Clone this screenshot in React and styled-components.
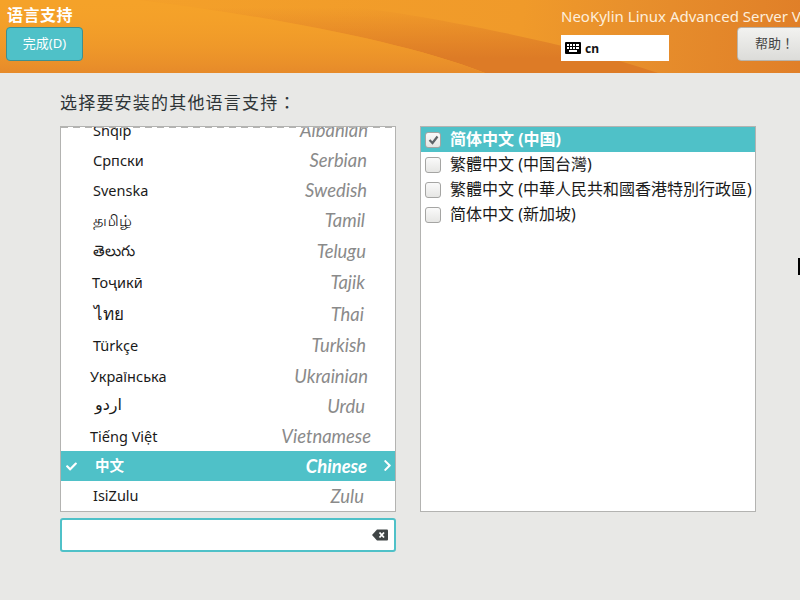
import styled, { createGlobalStyle } from 'styled-components';
import { FaCheck, FaChevronRight } from 'react-icons/fa';

const languages = [
  { native: 'Shqip', english: 'Albanian', height: 30, left: 32, right: 27 },
  { native: 'Српски', english: 'Serbian', height: 30, left: 32, right: 28 },
  { native: 'Svenska', english: 'Swedish', height: 30, left: 32, right: 28 },
  { native: 'தமிழ்', english: 'Tamil', height: 31, left: 32, right: 30, size: 16 },
  { native: 'తెలుగు', english: 'Telugu', height: 31, left: 32, right: 29, size: 15 },
  { native: 'Тоҷикӣ', english: 'Tajik', height: 31, left: 31, right: 30 },
  { native: 'ไทย', english: 'Thai', height: 32, left: 33, right: 31, size: 17 },
  { native: 'Türkçe', english: 'Turkish', height: 31, left: 32, right: 29 },
  { native: 'Українська', english: 'Ukrainian', height: 30, left: 29, right: 27 },
  { native: 'اردو', english: 'Urdu', height: 30, left: 34, right: 30, size: 16, lift: 4 },
  { native: 'Tiếng Việt', english: 'Vietnamese', height: 30, left: 29, right: 24 },
  { native: '中文', english: 'Chinese', height: 30, left: 34, right: 28, selected: true, lift: 3 },
  { native: 'IsiZulu', english: 'Zulu', height: 30, left: 32, right: 31, lift: 3 },
];

const locales = [
  { label: '简体中文 (中国)', checked: true },
  { label: '繁體中文 (中国台灣)' },
  { label: '繁體中文 (中華人民共和國香港特別行政區)' },
  { label: '简体中文 (新加坡)' },
];

function KeyboardIcon() {
  return (
    <svg width="16" height="12" viewBox="0 0 16 12">
      <rect width="16" height="12" rx="1" fill="#000" />
      <g fill="#fff">
        <rect x="2" y="2" width="2" height="2" />
        <rect x="5" y="2" width="2" height="2" />
        <rect x="8" y="2" width="2" height="2" />
        <rect x="11" y="2" width="3" height="2" />
        <rect x="2" y="5" width="2" height="2" />
        <rect x="5" y="5" width="2" height="2" />
        <rect x="8" y="5" width="2" height="2" />
        <rect x="11" y="5" width="3" height="2" />
        <rect x="4" y="8" width="8" height="2" />
      </g>
    </svg>
  );
}

function ClearIcon() {
  return (
    <svg width="16" height="12" viewBox="0 0 16 12">
      <path d="M5 0.5H15a1 1 0 0 1 1 1V10.500a1 1 0 0 1-1 1H5L0 6Z" fill="#3f4445" />
      <path d="M7.500 3.500L12 8.500M12 3.500L7.500 8.500" stroke="#fff" strokeWidth="1.800" />
    </svg>
  );
}

function App() {
  return (
    <>
      <GlobalStyle />
      <Page>
        <Header>
          <HeaderWave viewBox="0 0 800 73" preserveAspectRatio="none">
            <defs>
              <linearGradient id="leftShade" x1="0" y1="0" x2="0" y2="1">
                <stop offset="0" stopColor="#f5a229" stopOpacity="0" />
                <stop offset="1" stopColor="#e68a2a" stopOpacity="1" />
              </linearGradient>
              <linearGradient id="bandShade" x1="0" y1="0" x2="0" y2="1">
                <stop offset="0.1" stopColor="#dd7b26" stopOpacity="0" />
                <stop offset="0.8" stopColor="#dd7b26" stopOpacity="1" />
              </linearGradient>
            </defs>
            <path d="M0 0 L300 0 C400 10 560 40 658 73 L0 73Z" fill="url(#bandShade)" />
            <path d="M0 0 L140 0 C260 15 400 40 485 73 L0 73Z" fill="#f5a229" />
            <path d="M0 0 L140 0 C260 15 400 40 485 73 L0 73Z" fill="url(#leftShade)" />
          </HeaderWave>
          <LeftHead>
            <SpokeTitle>语言支持</SpokeTitle>
            <DoneButton>完成(D)</DoneButton>
          </LeftHead>
          <RightHead>
            <ProductName>NeoKylin Linux Advanced Server V</ProductName>
            <RightControls>
              <KeyboardBox>
                <KeyboardIcon />
                <span>cn</span>
              </KeyboardBox>
              <HelpButton>帮助！</HelpButton>
            </RightControls>
          </RightHead>
        </Header>
        <Main>
          <Heading>选择要安装的其他语言支持：</Heading>
          <Columns>
            <LeftColumn>
              <LanguageList>
                <ListScroll>
                  {languages.map((lang) => (
                    <LanguageRow key={lang.english} $height={lang.height} $selected={lang.selected}>
                      {lang.selected && (
                        <CheckMark>
                          <FaCheck size={11} />
                        </CheckMark>
                      )}
                      <NativeName $left={lang.left} $size={lang.size} $lift={lang.lift} $selected={lang.selected}>{lang.native}</NativeName>
                      <EnglishName $right={lang.right} $selected={lang.selected}>{lang.english}</EnglishName>
                      {lang.selected && (
                        <Chevron>
                          <FaChevronRight size={13} />
                        </Chevron>
                      )}
                    </LanguageRow>
                  ))}
                </ListScroll>
                <ScrollEdge />
              </LanguageList>
              <SearchBox>
                <ClearIcon />
              </SearchBox>
            </LeftColumn>
            <LocaleList>
              {locales.map((locale) => (
                <LocaleRow key={locale.label} $checked={locale.checked}>
                  <CheckBox $checked={locale.checked}>
                    {locale.checked && (
                      <svg width="11" height="10" viewBox="0 0 11 10">
                        <path d="M1.500 5L4.500 8L9.500 1.500" fill="none" stroke="#5e6468" strokeWidth="2.200" />
                      </svg>
                    )}
                  </CheckBox>
                  <LocaleLabel>{locale.label}</LocaleLabel>
                </LocaleRow>
              ))}
            </LocaleList>
          </Columns>
        </Main>
        <MouseCursor />
      </Page>
    </>
  );
}

export default App;

const sans = `"Noto Sans", "Open Sans", "Noto Sans CJK SC", "DejaVu Sans", sans-serif`;
// JP forms centre the full-width punctuation, as the reference has it
const centredPunct = `"Noto Sans", "Noto Sans CJK JP", sans-serif`;

const GlobalStyle = createGlobalStyle`
  html, body {
    margin: 0;
    padding: 0;
    background: #e8e8e6;
  }
`;

const Page = styled.div`
  position: relative;
  width: 800px;
  height: 600px;
  overflow: hidden;
  background: #e8e8e6;
  font-family: ${sans};
`;

const Header = styled.header`
  position: relative;
  display: flex;
  justify-content: space-between;
  height: 73px;
  overflow: hidden;
  background: linear-gradient(95deg, #f5a229 0%, #f09a2a 65%, #e8902c 78%, #e07f28 100%);
`;

const HeaderWave = styled.svg`
  position: absolute;
  inset: 0;
  width: 100%;
  height: 100%;
`;

const LeftHead = styled.div`
  position: relative;
  display: flex;
  flex-direction: column;
  align-items: flex-start;
  padding: 5px 0 0 6px;
`;

const SpokeTitle = styled.div`
  margin-left: 1px;
  height: 22px;
  font-size: 16px;
  font-weight: 700;
  line-height: 20px;
  letter-spacing: 0.5px;
  color: #fff;
`;

const DoneButton = styled.button`
  width: 77px;
  height: 34px;
  padding: 0 0 4px;
  border: 1px solid #3f8f8f;
  border-radius: 4px;
  background: #4fc1c8;
  font-family: ${sans};
  font-size: 13px;
  color: #fff;
`;

const RightHead = styled.div`
  position: relative;
  display: flex;
  flex-direction: column;
  width: 239px;
  flex-shrink: 0;
  padding-top: 6px;
`;

const ProductName = styled.div`
  height: 21px;
  font-size: 15px;
  line-height: 20px;
  white-space: nowrap;
  color: #fdeedb;
`;

const RightControls = styled.div`
  display: flex;
  align-items: flex-start;
  justify-content: space-between;
  margin-right: -20px;
`;

const KeyboardBox = styled.div`
  display: flex;
  align-items: center;
  gap: 4px;
  width: 104px;
  height: 26px;
  margin-top: 8px;
  padding-left: 4px;
  background: #fff;
  font-size: 12px;
  font-weight: 700;
  color: #111;
`;

const HelpButton = styled.button`
  width: 83px;
  height: 34px;
  padding: 0 0 3px 0;
  border: 1px solid #b9b4ac;
  border-radius: 4px;
  background: linear-gradient(#f2f2f0, #dcdcd9);
  font-family: ${centredPunct};
  font-size: 13px;
  text-align: left;
  text-indent: 17px;
  color: #444;
`;

const Main = styled.main`
  padding: 18px 44px 0 60px;
`;

const Heading = styled.h1`
  margin: 0 0 11px;
  height: 24px;
  font-family: ${centredPunct};
  font-size: 17px;
  font-weight: 400;
  line-height: 24px;
  letter-spacing: 1.2px;
  color: #2e3436;
`;

const Columns = styled.div`
  display: flex;
  gap: 24px;
  align-items: flex-start;
`;

const LeftColumn = styled.div`
  display: flex;
  flex-direction: column;
  gap: 6px;
  width: 336px;
`;

const LanguageList = styled.div`
  position: relative;
  height: 384px;
  overflow: hidden;
  border: 1px solid #b3b3b1;
  background: #fff;
`;

const ListScroll = styled.div`
  margin-top: -12px;
`;

const ScrollEdge = styled.div`
  position: absolute;
  top: 0;
  left: 0;
  right: 0;
  height: 1px;
  background: repeating-linear-gradient(90deg, #b3b3b1 0 7px, transparent 7px 12px);
`;

const LanguageRow = styled.div`
  position: relative;
  display: flex;
  align-items: center;
  justify-content: space-between;
  height: ${(props) => props.$height}px;
  background: ${(props) => (props.$selected ? '#4fc1c8' : 'transparent')};
`;

const NativeName = styled.span`
  padding-left: ${(props) => props.$left}px;
  padding-bottom: ${(props) => props.$lift || 1}px;
  font-size: ${(props) => props.$size || 14.5}px;
  font-weight: ${(props) => (props.$selected ? 700 : 400)};
  color: ${(props) => (props.$selected ? '#fff' : '#1a1a1a')};
`;

const EnglishName = styled.span`
  padding-right: ${(props) => props.$right}px;
  padding-bottom: 1px;
  font-family: Lato, "Noto Sans", sans-serif;
  font-size: 18.4px;
  font-style: italic;
  font-weight: ${(props) => (props.$selected ? 700 : 400)};
  color: ${(props) => (props.$selected ? '#fff' : '#8a8a8a')};
`;

const CheckMark = styled.span`
  position: absolute;
  left: 5px;
  top: 10px;
  display: flex;
  color: #fff;
`;

const Chevron = styled.span`
  position: absolute;
  right: 1px;
  top: 8px;
  display: flex;
  color: #fff;
`;

const SearchBox = styled.div`
  display: flex;
  align-items: center;
  justify-content: flex-end;
  box-sizing: border-box;
  height: 34px;
  padding: 0 6px 0 0;
  border: 2px solid #4fc1c8;
  border-radius: 3px;
  background: #fff;
`;

const LocaleList = styled.div`
  width: 334px;
  height: 384px;
  border: 1px solid #b3b3b1;
  background: #fff;
`;

const LocaleRow = styled.div`
  display: flex;
  align-items: center;
  gap: 9px;
  height: 25px;
  padding-left: 4px;
  font-weight: ${(props) => (props.$checked ? 700 : 400)};
  white-space: nowrap;
  color: ${(props) => (props.$checked ? '#fff' : '#1a1a1a')};
  background: ${(props) => (props.$checked ? '#4fc1c8' : 'transparent')};
`;

const LocaleLabel = styled.span`
  font-size: 16px;
  line-height: 22px;
  padding-bottom: 2px;
`;

const CheckBox = styled.span`
  display: flex;
  align-items: center;
  justify-content: center;
  box-sizing: border-box;
  width: 16px;
  height: 16px;
  border: 1px solid #a5a5a3;
  border-radius: 3px;
  background: linear-gradient(#fafafa, #e6e6e4);
`;

const MouseCursor = styled.div`
  position: absolute;
  left: 798px;
  top: 258px;
  width: 2px;
  height: 17px;
  background: #000;
`;
